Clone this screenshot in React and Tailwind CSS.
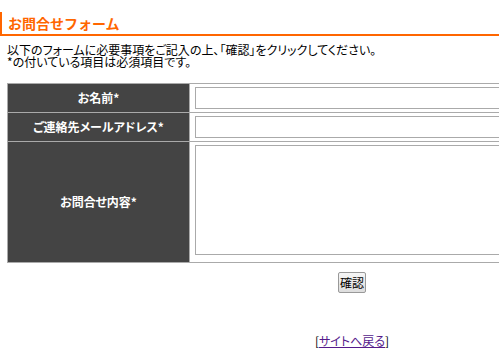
const Label = ({ children }) => (
  <th className="w-[182px] border border-[#aaaaaa] bg-[#444444] p-0 text-center align-middle text-[12px] font-bold text-white">
    {children}
  </th>
);

export default function App() {
  return (
    <div className="h-[352px] w-full overflow-hidden bg-white text-black [font-family:'Noto_Sans_CJK_JP',sans-serif] [font-feature-settings:'palt']">
      <div className="w-[704px]">
        <h1 className="mt-3 flex h-6 items-center border-b-2 border-l-2 border-[#ff6600] pl-[6px] text-[14px] font-bold leading-none text-[#ff6600] [font-feature-settings:normal]">
          お問合せフォーム
        </h1>

        <p className="mt-2 px-[7px] text-[12px] leading-[12px]">
          以下のフォームに必要事項をご記入の上、「確認」をクリックしてください。
          <br />
          *の付いている項目は必須項目です。
        </p>

        <div className="mt-[15px] px-[7px]">
          <table className="w-full border-collapse border border-[#aaaaaa]">
            <tbody>
              <tr className="h-[29px]">
                <Label>お名前*</Label>
                <td className="border border-[#aaaaaa] p-0 pl-[5px]">
                  <input
                    type="text"
                    className="block h-[22px] w-[480px] border border-[#aaaaaa] bg-white outline-none"
                  />
                </td>
              </tr>
              <tr className="h-[29px]">
                <Label>ご連絡先メールアドレス*</Label>
                <td className="border border-[#aaaaaa] p-0 pl-[5px]">
                  <input
                    type="email"
                    className="block h-[22px] w-[480px] border border-[#aaaaaa] bg-white outline-none"
                  />
                </td>
              </tr>
              <tr className="h-[121px]">
                <Label>お問合せ内容*</Label>
                <td className="border border-[#aaaaaa] p-0 pl-[5px] align-top">
                  <textarea className="mt-[3px] block h-[110px] w-[480px] resize-none border border-[#aaaaaa] bg-white outline-none" />
                </td>
              </tr>
            </tbody>
          </table>
        </div>

        <div className="mt-[9px] flex justify-center">
          <button
            type="button"
            className="h-[21px] w-[28px] rounded-[2px] border border-[#999999] bg-gradient-to-b from-[#f6f6f6] to-[#dddddd] p-0 text-[12px] leading-none text-black"
          >
            確認
          </button>
        </div>

        <p className="mt-[42px] text-center text-[12px] leading-[12px]">
          [<a href="#" className="text-[#551a8b] underline">サイトへ戻る</a>]
        </p>
      </div>
    </div>
  );
}
